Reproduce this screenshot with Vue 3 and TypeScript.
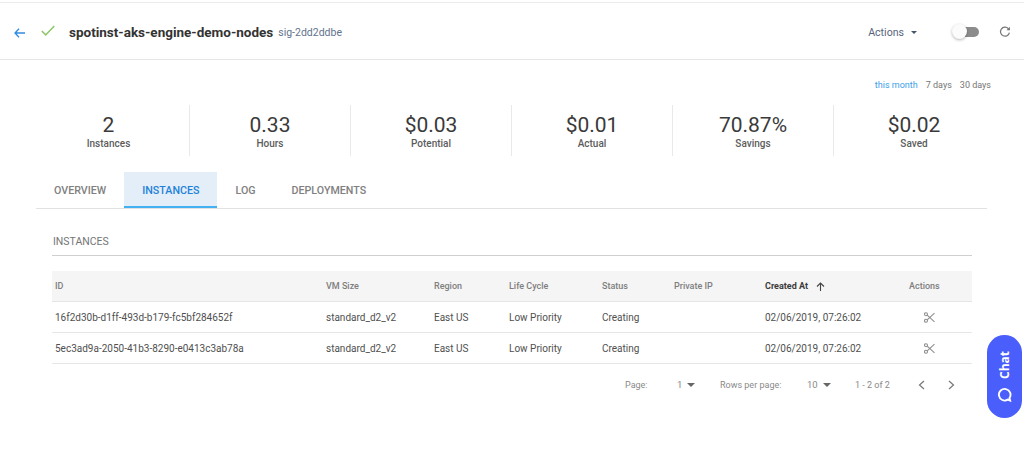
<script setup lang="ts">
const stats = [
  { value: '2', label: 'Instances' },
  { value: '0.33', label: 'Hours' },
  { value: '$0.03', label: 'Potential' },
  { value: '$0.01', label: 'Actual' },
  { value: '70.87%', label: 'Savings' },
  { value: '$0.02', label: 'Saved' },
]
const tabs = ['OVERVIEW', 'INSTANCES', 'LOG', 'DEPLOYMENTS']
const rows = [
  '16f2d30b-d1ff-493d-b179-fc5bf284652f',
  '5ec3ad9a-2050-41b3-8290-e0413c3ab78a',
]
</script>

<template>
  <div class="page">
    <header class="top">
      <svg class="back" width="11" height="10" viewBox="0 0 11 10" fill="none" stroke="#2f8ae0" stroke-width="1.300">
        <path d="M11 5H1.200M5 .8 1 5l4 4.200" />
      </svg>
      <svg class="check" width="14" height="11" viewBox="0 0 14 11" fill="none" stroke="#8cc665" stroke-width="1.500">
        <path d="M.8 6l3.900 3.900L13.300 1" />
      </svg>
      <span class="title">spotinst-aks-engine-demo-nodes</span>
      <span class="sig">sig-2dd2ddbe</span>
      <span class="actions">Actions<i class="caret dark"></i></span>
      <span class="toggle"><span class="knob"></span></span>
      <svg class="refresh" width="12" height="12" viewBox="0 0 12 12" fill="none" stroke="#757575" stroke-width="1.200">
        <path d="M10.400 6.600A4.500 4.500 0 1 1 9.300 2.600L10.500 3.800" />
        <path d="M10.900 .8v3.400H7.500" fill="#757575" stroke="none" />
      </svg>
    </header>

    <div class="range">
      <span class="on">this month</span><span>7 days</span><span>30 days</span>
    </div>

    <section class="stats">
      <div v-for="s in stats" :key="s.label" class="stat">
        <div class="value">{{ s.value }}</div>
        <div class="label">{{ s.label }}</div>
      </div>
    </section>

    <nav class="tabs">
      <span v-for="t in tabs" :key="t" class="tab" :class="{ active: t === 'INSTANCES' }">{{ t }}</span>
    </nav>

    <main class="content">
      <h2 class="heading">INSTANCES</h2>
      <div class="row head">
        <span class="first">ID</span><span>VM Size</span><span>Region</span><span>Life Cycle</span><span>Status</span><span>Private IP</span>
        <span class="sorted">Created At
          <svg width="9" height="9" viewBox="0 0 9 9" fill="none" stroke="#444" stroke-width="1.100"><path d="M4.500 9V1M1 4.500 4.500 1 8 4.500" /></svg>
        </span>
        <span class="act">Actions</span>
      </div>
      <div v-for="id in rows" :key="id" class="row">
        <span class="first">{{ id }}</span><span>standard_d2_v2</span><span>East US</span><span>Low Priority</span><span>Creating</span><span></span>
        <span>02/06/2019, 07:26:02</span>
        <span class="act">
          <svg width="11" height="11" viewBox="0 0 11 11" fill="none" stroke="#8f8f8f" stroke-width="1.100">
            <circle cx="2" cy="2.200" r="1.500" /><circle cx="2" cy="8.800" r="1.500" />
            <path d="M3.200 3.100 10.500 9.800M3.200 7.900 10.500 1.200" />
          </svg>
        </span>
      </div>
      <div class="pager">
        <span class="p-page">Page:</span>
        <span class="p-one">1<i class="caret"></i></span>
        <span class="p-rows">Rows per page:</span>
        <span class="p-ten">10<i class="caret"></i></span>
        <span class="p-count">1 - 2 of 2</span>
        <svg class="p-prev" width="7" height="10" viewBox="0 0 7 10" fill="none" stroke="#777" stroke-width="1.200"><path d="M6 1 1.500 5 6 9" /></svg>
        <svg class="p-next" width="7" height="10" viewBox="0 0 7 10" fill="none" stroke="#777" stroke-width="1.200"><path d="M1 1l4.500 4L1 9" /></svg>
      </div>
    </main>

    <button class="chat">
      <span class="chat-text">Chat</span>
      <svg width="15" height="15" viewBox="0 0 16 16" fill="none" stroke="#fff" stroke-width="2">
        <path d="M14 14.500 13.300 11.800A6.200 6.200 0 1 0 11.500 13.500Z" />
      </svg>
    </button>
  </div>
</template>

<style>
html, body { margin: 0; background: #fff; }
</style>

<style scoped>
.page {
  position: relative;
  width: 1024px;
  height: 462px;
  overflow: hidden;
  box-sizing: border-box;
  padding-top: 2px;
  font-family: Roboto, "Liberation Sans", sans-serif;
  color: #444;
  background: #fff;
}
.top {
  display: flex;
  align-items: center;
  box-sizing: border-box;
  height: 58px;
  border-top: 1px solid #ececec;
  border-bottom: 1px solid #e6e6e6;
  padding: 2px 13px 0 13px;
}
.back { margin: 1px 16px 0 1px; }
.check { margin-right: 14px; margin-top: -3px; }
.title { font-size: 13.500px; font-weight: 700; color: #333; }
.sig { font-size: 10.500px; color: #62738c; margin-left: 5px; }
.actions { margin-left: auto; font-size: 10.600px; color: #56657c; display: flex; align-items: center; }
.caret {
  display: inline-block;
  border-left: 4px solid transparent;
  border-right: 4px solid transparent;
  border-top: 4px solid #666;
  margin-left: 5px;
}
.caret.dark { border-top-color: #44546a; border-left-width: 3px; border-right-width: 3px; border-top-width: 3px; margin-left: 7px; }
.toggle {
  position: relative;
  width: 22px;
  height: 10px;
  border-radius: 5px;
  background: #8c8c8c;
  margin-left: 40px;
}
.knob {
  position: absolute;
  left: -5px;
  top: -3px;
  width: 15px;
  height: 15px;
  border-radius: 50%;
  background: #fbfbfb;
  box-shadow: 0 1px 3px rgba(0, 0, 0, .3);
}
.refresh { margin-left: 20px; }
.range {
  display: flex;
  justify-content: flex-end;
  gap: 8px;
  padding: 19px 33px 0 0;
  font-size: 9px;
  line-height: 12px;
  color: #757575;
}
.range .on { color: #3aa1ea; }
.stats {
  display: flex;
  margin: 14px 0 0 28px;
}
.stat {
  flex: none;
  box-sizing: border-box;
  width: 161px;
  height: 51px;
  text-align: center;
  border-left: 1px solid #e9e9e9;
}
.stat:first-child { border-left: 0; }
.value { font-size: 21px; line-height: 24px; padding-top: 8px; color: #3a3a3a; }
.label { font-size: 10px; font-weight: 500; line-height: 14px; margin-top: 0; color: #5c5c5c; }
.tabs {
  display: flex;
  margin: 16px 37px 0 36px;
  border-bottom: 1px solid #e2e2e2;
  height: 36px;
}
.tab {
  padding: 0 18px;
  font-size: 10.700px;
  font-weight: 500;
  line-height: 37px;
  color: #808080;
}
.active {
  background: #e3eef8;
  color: #1f82d8;
  border-bottom: 2px solid #43b0f1;
  height: 34px;
}
.content { margin: 0 52px; }
.heading {
  margin: 26px 0 0;
  font-size: 10.500px;
  font-weight: 400;
  line-height: 14px;
  height: 20px;
  padding-left: 1px;
  color: #757575;
  border-bottom: 1px solid #cfcfcf;
}
.row {
  display: grid;
  grid-template-columns: 274px 108px 75px 93px 72px 91px 144px 1fr;
  align-items: center;
  height: 30px;
  border-bottom: 1px solid #e6e6e6;
  font-size: 10px;
  color: #505050;
}
.first { padding-left: 3px; }
.head {
  margin-top: 15px;
  background: #f5f5f5;
  font-weight: 500;
  color: #7e7e7e;
  font-size: 9px;
}
.sorted { color: #3c3c3c; display: flex; align-items: center; gap: 8px; font-weight: 700; }
.act { text-align: left; }
.row:not(.head) .act { padding-left: 15px; display: flex; }
.pager {
  position: relative;
  height: 42px;
  font-size: 9px;
  color: #8a8a8a;
}
.pager > * { position: absolute; top: 15px; line-height: 12px; }
.p-page { left: 573px; }
.p-one { left: 625px; display: flex; align-items: center; font-size: 9.500px; }
.p-rows { left: 668px; }
.p-ten { left: 755px; display: flex; align-items: center; font-size: 9.500px; }
.p-count { left: 803px; }
.p-prev { left: 866px; top: 16px; }
.p-next { left: 896px; top: 16px; }
.chat {
  position: absolute;
  left: 987px;
  top: 335px;
  width: 35px;
  height: 83px;
  border: 0;
  border-radius: 18px;
  background: #4a5efc;
  padding: 0;
  color: #fff;
  display: flex;
  flex-direction: column;
  align-items: center;
  justify-content: center;
  gap: 8px;
}
.chat-text {
  writing-mode: vertical-rl;
  transform: rotate(180deg);
  font-family: "Open Sans", Roboto, sans-serif;
  font-size: 12px;
  font-weight: 700;
  line-height: 14px;
}
</style>
